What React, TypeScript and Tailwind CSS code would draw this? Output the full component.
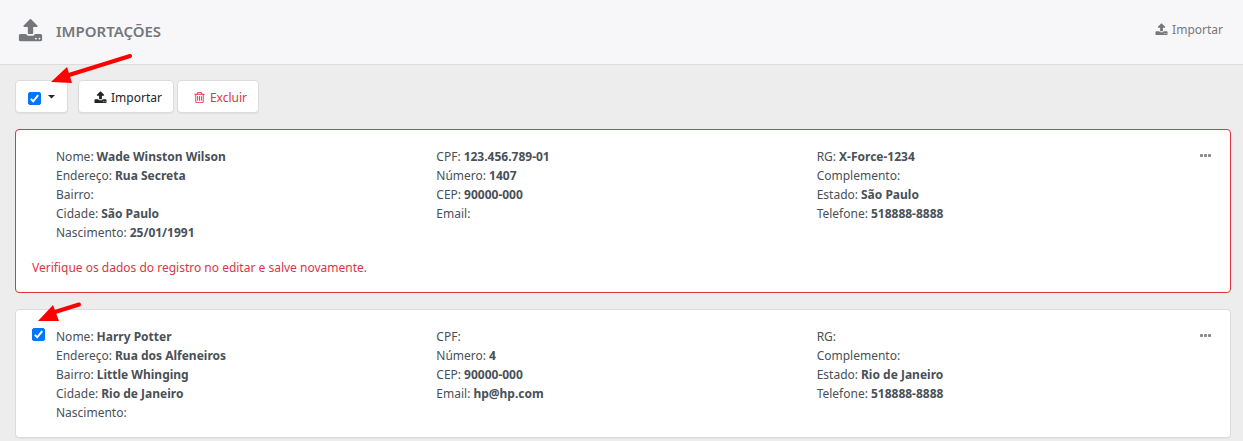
import React, { useState } from "react";

type Field = { label: string; value?: string };
type Person = { id: string; columns: Field[][]; error?: string };

const people: Person[] = [
  {
    id: "wade",
    error: "Verifique os dados do registro no editar e salve novamente.",
    columns: [
      [
        { label: "Nome", value: "Wade Winston Wilson" },
        { label: "Endereço", value: "Rua Secreta" },
        { label: "Bairro" },
        { label: "Cidade", value: "São Paulo" },
        { label: "Nascimento", value: "25/01/1991" },
      ],
      [
        { label: "CPF", value: "123.456.789-01" },
        { label: "Número", value: "1407" },
        { label: "CEP", value: "90000-000" },
        { label: "Email" },
      ],
      [
        { label: "RG", value: "X-Force-1234" },
        { label: "Complemento" },
        { label: "Estado", value: "São Paulo" },
        { label: "Telefone", value: "518888-8888" },
      ],
    ],
  },
  {
    id: "harry",
    columns: [
      [
        { label: "Nome", value: "Harry Potter" },
        { label: "Endereço", value: "Rua dos Alfeneiros" },
        { label: "Bairro", value: "Little Whinging" },
        { label: "Cidade", value: "Rio de Janeiro" },
        { label: "Nascimento" },
      ],
      [
        { label: "CPF" },
        { label: "Número", value: "4" },
        { label: "CEP", value: "90000-000" },
        { label: "Email", value: "hp@hp.com" },
      ],
      [
        { label: "RG" },
        { label: "Complemento" },
        { label: "Estado", value: "Rio de Janeiro" },
        { label: "Telefone", value: "518888-8888" },
      ],
    ],
  },
];

function UploadIcon({ className }: { className: string }) {
  return (
    <svg viewBox="0 0 1792 1792" fill="currentColor" aria-hidden="true" className={className}>
      <path d="M1344 1472q0-26-19-45t-45-19-45 19-19 45 19 45 45 19 45-19 19-45zm256 0q0-26-19-45t-45-19-45 19-19 45 19 45 45 19 45-19 19-45zm128-224v320q0 40-28 68t-68 28h-1472q-40 0-68-28t-28-68v-320q0-40 28-68t68-28h427q21 56 70.5 92t110.5 36h256q61 0 110.5-36t70.5-92h427q40 0 68 28t28 68zm-325-648q-17 40-59 40h-256v448q0 26-19 45t-45 19h-256q-26 0-45-19t-19-45v-448h-256q-42 0-59-40-17-39 14-69l448-448q18-19 45-19t45 19l448 448q31 30 14 69z" />
    </svg>
  );
}

function TrashIcon({ className }: { className: string }) {
  return (
    <svg viewBox="0 0 1792 1792" fill="currentColor" aria-hidden="true" className={className}>
      <path d="M704 736v576q0 14-9 23t-23 9h-64q-14 0-23-9t-9-23v-576q0-14 9-23t23-9h64q14 0 23 9t9 23zm256 0v576q0 14-9 23t-23 9h-64q-14 0-23-9t-9-23v-576q0-14 9-23t23-9h64q14 0 23 9t9 23zm256 0v576q0 14-9 23t-23 9h-64q-14 0-23-9t-9-23v-576q0-14 9-23t23-9h64q14 0 23 9t9 23zm128 724v-948h-896v948q0 22 7 40.5t14.5 27 10.5 8.5h832q3 0 10.5-8.5t14.5-27 7-40.5zm-672-1076h448l-48-117q-7-9-17-11h-317q-10 2-17 11zm928 32v64q0 14-9 23t-23 9h-96v948q0 83-47 143.5t-113 60.5h-832q-66 0-113-58.5t-47-141.5v-952h-96q-14 0-23-9t-9-23v-64q0-14 9-23t23-9h309l70-167q15-37 54-63t79-26h320q40 0 79 26t54 63l70 167h309q14 0 23 9t9 23z" />
    </svg>
  );
}

function CheckBox({ label, checked, onChange }: { label: string; checked: boolean; onChange: (v: boolean) => void }) {
  return (
    <span className="grid size-[13px] shrink-0">
      <input
        type="checkbox"
        aria-label={label}
        checked={checked}
        onChange={(e) => onChange(e.target.checked)}
        className="peer col-start-1 row-start-1 size-[13px] appearance-none rounded-[2px] border border-[#767676] bg-white checked:border-[#0075ff] checked:bg-[#0075ff]"
      />
      <svg viewBox="0 0 13 13" aria-hidden="true" className="pointer-events-none invisible col-start-1 row-start-1 size-[13px] peer-checked:visible">
        <path d="M2.8 6.9 5.2 9.3 10.2 3.2" fill="none" stroke="#fff" strokeWidth="2" />
      </svg>
    </span>
  );
}

function PersonCard({ person, checked, onChange }: { person: Person; checked: boolean; onChange: (v: boolean) => void }) {
  return (
    <article
      className={
        person.error
          ? "rounded border border-[#dc3545] bg-white px-4 pt-[17px] pb-[15px]"
          : "rounded border border-[#dcdcdc] bg-white px-4 pt-[17px] pb-[15px] shadow-[0_1px_1px_rgba(0,0,0,0.04)]"
      }
    >
      <div className="flex items-start">
        <div className="w-6 shrink-0 pt-px">
          {!person.error && <CheckBox label="Selecionar registro" checked={checked} onChange={onChange} />}
        </div>
        <div className="grid flex-1 grid-cols-3">
          {person.columns.map((fields, i) => (
            <dl key={i}>
              {fields.map((field) => (
                <div key={field.label} className="flex gap-[3px]">
                  <dt>{field.label}:</dt>
                  {field.value && <dd className="font-bold">{field.value}</dd>}
                </div>
              ))}
            </dl>
          ))}
        </div>
        <button type="button" aria-label="Mais opções" className="flex h-[17px] w-[17px] shrink-0 items-center justify-center text-[#868a8f]">
          <svg viewBox="0 0 11 3" fill="currentColor" aria-hidden="true" className="h-[3px] w-[11px]">
            <rect width="3" height="3" rx="0.7" />
            <rect x="4" width="3" height="3" rx="0.7" />
            <rect x="8" width="3" height="3" rx="0.7" />
          </svg>
        </button>
      </div>
      {person.error && <p className="mt-4 text-[#dc3545]">{person.error}</p>}
    </article>
  );
}

const buttonClass = "flex h-[33px] items-center rounded border border-[#dcdcdc] bg-white pt-px shadow-[0_1px_1px_rgba(0,0,0,0.06)]";

export default function App() {
  const [all, setAll] = useState(true);
  const [selected, setSelected] = useState<Record<string, boolean>>({ harry: true });

  return (
    <div className="relative min-h-screen bg-[#ededed] font-['Noto_Sans','Open_Sans',sans-serif] text-[12px] leading-[19px] text-[#495057]">
      <header className="flex h-[65px] items-center justify-between border-b border-[#dcdcdc] bg-[#f7f7f9] pr-5 pb-1 pl-[18px] text-[#76777a]">
        <div className="flex items-center gap-[13px]">
          <UploadIcon className="size-[25px]" />
          <h1 className="pt-0.5 text-[15px] font-semibold">IMPORTAÇÕES</h1>
        </div>
        <a href="#importar" className="flex items-center gap-1 pb-0.5">
          <UploadIcon className="size-[13px]" />
          Importar
        </a>
      </header>

      <main className="pt-[15px] pr-3 pb-1 pl-[15px]">
        <div className="flex">
          <div className={buttonClass + " mr-[10px] gap-[7px] px-3"}>
            <div className="pt-0.5">
              <CheckBox label="Selecionar todos" checked={all} onChange={setAll} />
            </div>
            <button type="button" aria-label="Opções de seleção" className="flex h-full items-center">
              <svg viewBox="0 0 7 4" aria-hidden="true" className="h-1 w-[7px]">
                <path d="M0 0h7L3.5 3.5z" fill="#212529" />
              </svg>
            </button>
          </div>
          <button type="button" className={buttonClass + " mr-[3px] gap-1 pr-[11px] pl-[15px] text-[#212529]"}>
            <UploadIcon className="size-[13px]" />
            Importar
          </button>
          <button type="button" className={buttonClass + " gap-1 pr-[11px] pl-[15px] text-[#dc3545]"}>
            <TrashIcon className="size-[13px]" />
            Excluir
          </button>
        </div>

        <div className="mt-4 flex flex-col gap-4">
          {people.map((person) => (
            <PersonCard
              key={person.id}
              person={person}
              checked={!!selected[person.id]}
              onChange={(v) => setSelected({ ...selected, [person.id]: v })}
            />
          ))}
        </div>
      </main>

      <svg viewBox="0 0 82 32" aria-hidden="true" className="pointer-events-none absolute top-[53px] left-[51px] h-8 w-[82px]">
        <path d="M18 22 79 3" stroke="#fe0000" strokeWidth="4" strokeLinecap="round" />
        <path d="M0 29 16 14 21 30z" fill="#fe0000" />
      </svg>
      <svg viewBox="0 0 46 22" aria-hidden="true" className="pointer-events-none absolute top-[301px] left-[37px] h-[22px] w-[46px]">
        <path d="M18 11 42 3.5" stroke="#fe0000" strokeWidth="4" strokeLinecap="round" />
        <path d="M1 20 16 4 22 20z" fill="#fe0000" />
      </svg>
    </div>
  );
}
